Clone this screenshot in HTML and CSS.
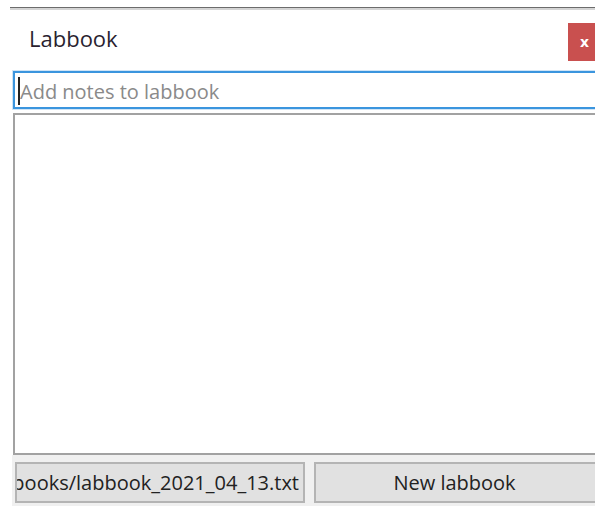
FILE: index.html
```html
<!DOCTYPE html>
<html lang="en">
<head>
<meta charset="utf-8">
<title>Labbook</title>
<link rel="stylesheet" href="styles.css">
</head>
<body>
<div class="window">
  <div class="top-rule"></div>
  <header class="titlebar">
    <h1 class="title">Labbook</h1>
    <button class="close" type="button">x</button>
  </header>
  <div class="note-field">
    <span class="caret"></span>
    <span class="placeholder">Add notes to labbook</span>
  </div>
  <div class="log"></div>
  <footer class="actions">
    <div class="btn path"><span>C:/Users/lab/labbooks/labbook_2021_04_13.txt</span></div>
    <div class="btn new">New labbook</div>
  </footer>
</div>
</body>
</html>
```

FILE: styles.css
```css
html, body {
  margin: 0;
  padding: 0;
  background: #ffffff;
}

body {
  font-family: "Open Sans", "DejaVu Sans", sans-serif;
  color: #222222;
  width: 595px;
  height: 506px;
  overflow: hidden;
}

.window {
  display: flex;
  flex-direction: column;
  padding-top: 7px;
}

.top-rule {
  margin-left: 10px;
  height: 1px;
  background: #6c6c6c;
  border-bottom: 2px solid #d4d4d4;
}

.titlebar {
  display: flex;
  align-items: flex-start;
  justify-content: space-between;
  height: 61px;
}

.title {
  margin: 14px 0 0 29px;
  font-size: 22px;
  font-weight: 400;
  line-height: 28px;
  color: #2a1f30;
}

.close {
  margin-top: 13px;
  width: 27px;
  height: 38px;
  padding: 0 0 0 12px;
  border: none;
  background: #c9504f;
  color: #ffffff;
  font-family: "DejaVu Sans", sans-serif;
  font-weight: 700;
  font-size: 14px;
  text-align: left;
}

.note-field {
  margin-left: 13px;
  margin-right: -20px;
  height: 34px;
  border: 2px solid #3b95de;
  box-shadow: 0 0 0 1px #cfe4f6;
  display: flex;
  align-items: center;
  padding-left: 3px;
}

.caret {
  width: 2px;
  height: 28px;
  margin-top: 2px;
  background: #222222;
}

.placeholder {
  font-size: 20px;
  color: #8a8a8a;
  padding-top: 2px;
}

.log {
  margin-top: 4px;
  margin-left: 13px;
  margin-right: -20px;
  height: 338px;
  border: 2px solid #a2a2a2;
  background: #ffffff;
}

.actions {
  margin-left: 12px;
  background: #f0f0f0;
  display: flex;
  gap: 9px;
  padding: 7px 0 3px 3px;
  margin-right: -20px;
}

.btn {
  height: 37px;
  border: 2px solid #b4b4b4;
  background: #e1e1e1;
  font-size: 20px;
  line-height: 37px;
  color: #222222;
  white-space: nowrap;
  overflow: hidden;
}

.path {
  width: 282px;
  display: flex;
  justify-content: flex-end;
  padding-right: 4px;
  box-sizing: content-box;
}

.path span {
  flex-shrink: 0;
}

.new {
  flex: 1;
  text-align: center;
  padding-right: 20px;
}
```
